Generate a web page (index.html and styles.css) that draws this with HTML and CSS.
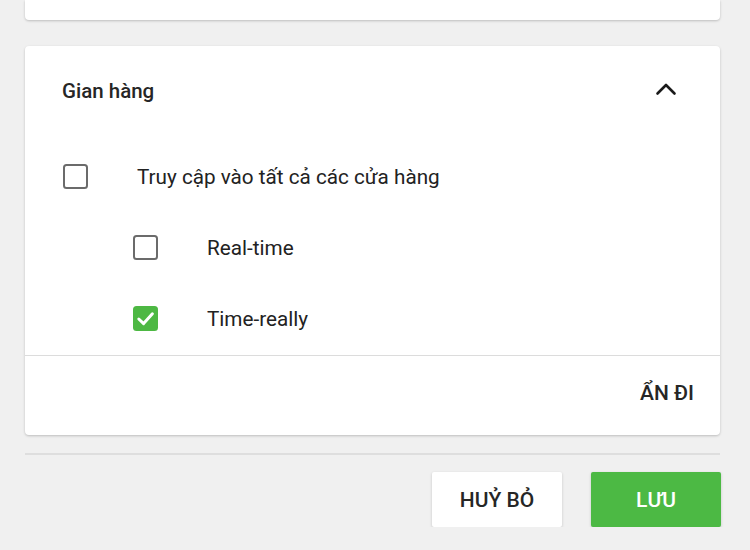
FILE: index.html
```html
<!DOCTYPE html>
<html lang="vi">
<head>
<meta charset="utf-8">
<link rel="stylesheet" href="styles.css">
</head>
<body>
<div class="page">
  <div class="card card-top"></div>
  <div class="card panel">
    <div class="panel-head">
      <span class="title">Gian hàng</span>
      <svg class="chevron" width="24" height="24" viewBox="0 0 24 24"><path d="M3.5 16.5 L12 8 L20.5 16.5" fill="none" stroke="#1a1a1a" stroke-width="2.6" stroke-linecap="round" stroke-linejoin="round"/></svg>
    </div>
    <div class="rows">
      <label class="row">
        <span class="box"></span>
        <span class="label">Truy cập vào tất cả các cửa hàng</span>
      </label>
      <label class="row sub">
        <span class="box"></span>
        <span class="label">Real-time</span>
      </label>
      <label class="row sub">
        <span class="box checked"><svg width="25" height="25" viewBox="0 0 25 25"><path d="M5.8 13 L10.6 17.6 L19.4 7.8" fill="none" stroke="#fff" stroke-width="3" stroke-linecap="round" stroke-linejoin="round"/></svg></span>
        <span class="label">Time-really</span>
      </label>
    </div>
    <div class="panel-foot">
      <span class="hide">ẨN ĐI</span>
    </div>
  </div>
  <div class="sep"></div>
  <div class="actions">
    <button class="btn btn-cancel">HUỶ BỎ</button>
    <button class="btn btn-save">LƯU</button>
  </div>
</div>
</body>
</html>
```
FILE: styles.css
```css
html, body {
  margin: 0;
  padding: 0;
  background: #f0f0f0;
  font-family: Roboto, "Noto Sans", "Liberation Sans", sans-serif;
  color: #222;
}
.page {
  width: 695px;
  margin-left: 25px;
  display: flex;
  flex-direction: column;
}
.card {
  background: #fff;
  border-radius: 4px;
  box-shadow: 0 1px 3px rgba(0,0,0,0.14), 0 1px 2px rgba(0,0,0,0.08);
}
.card-top {
  height: 20px;
  border-radius: 0 0 4px 4px;
}
.panel {
  margin-top: 26px;
  display: flex;
  flex-direction: column;
}
.panel-head {
  height: 90px;
  display: flex;
  align-items: center;
  justify-content: space-between;
  padding: 0 42px 0 37px;
}
.title {
  font-size: 20.5px;
  font-weight: 500;
  color: #262626;
}
.chevron {
  display: block;
  margin-top: -4px;
}
.rows {
  padding: 5px 0 1px;
  border-bottom: 1px solid #dcdcdc;
}
.row {
  height: 71px;
  display: flex;
  align-items: center;
  gap: 49px;
  padding-left: 38px;
}
.row.sub {
  padding-left: 108px;
}
.box {
  width: 25px;
  height: 25px;
  box-sizing: border-box;
  border: 2.5px solid #6b6b6b;
  border-radius: 3.5px;
  flex: none;
  display: flex;
}
.box.checked {
  border: none;
  background: #4db843;
}
.label {
  font-size: 20.7px;
  color: #222;
}
.panel-foot {
  height: 79px;
  display: flex;
  align-items: center;
  justify-content: flex-end;
  padding: 0 26px 5px 0;
  box-sizing: border-box;
}
.hide {
  font-size: 21px;
  font-weight: 500;
  color: #262626;
}
.sep {
  margin-top: 18px;
  height: 2px;
  background: #dedede;
}
.actions {
  display: flex;
  justify-content: flex-end;
  gap: 29px;
  margin-top: 17px;
  margin-right: -1px;
}
.btn {
  width: 130px;
  height: 55px;
  border: none;
  border-radius: 2px;
  font-family: Roboto, "Noto Sans", "Liberation Sans", sans-serif;
  font-size: 21px;
  font-weight: 500;
  box-shadow: 0 1px 3px rgba(0,0,0,0.18);
}
.btn-cancel {
  background: #fff;
  color: #262626;
}
.btn-save {
  background: #4cb944;
  color: #fff;
}
```
